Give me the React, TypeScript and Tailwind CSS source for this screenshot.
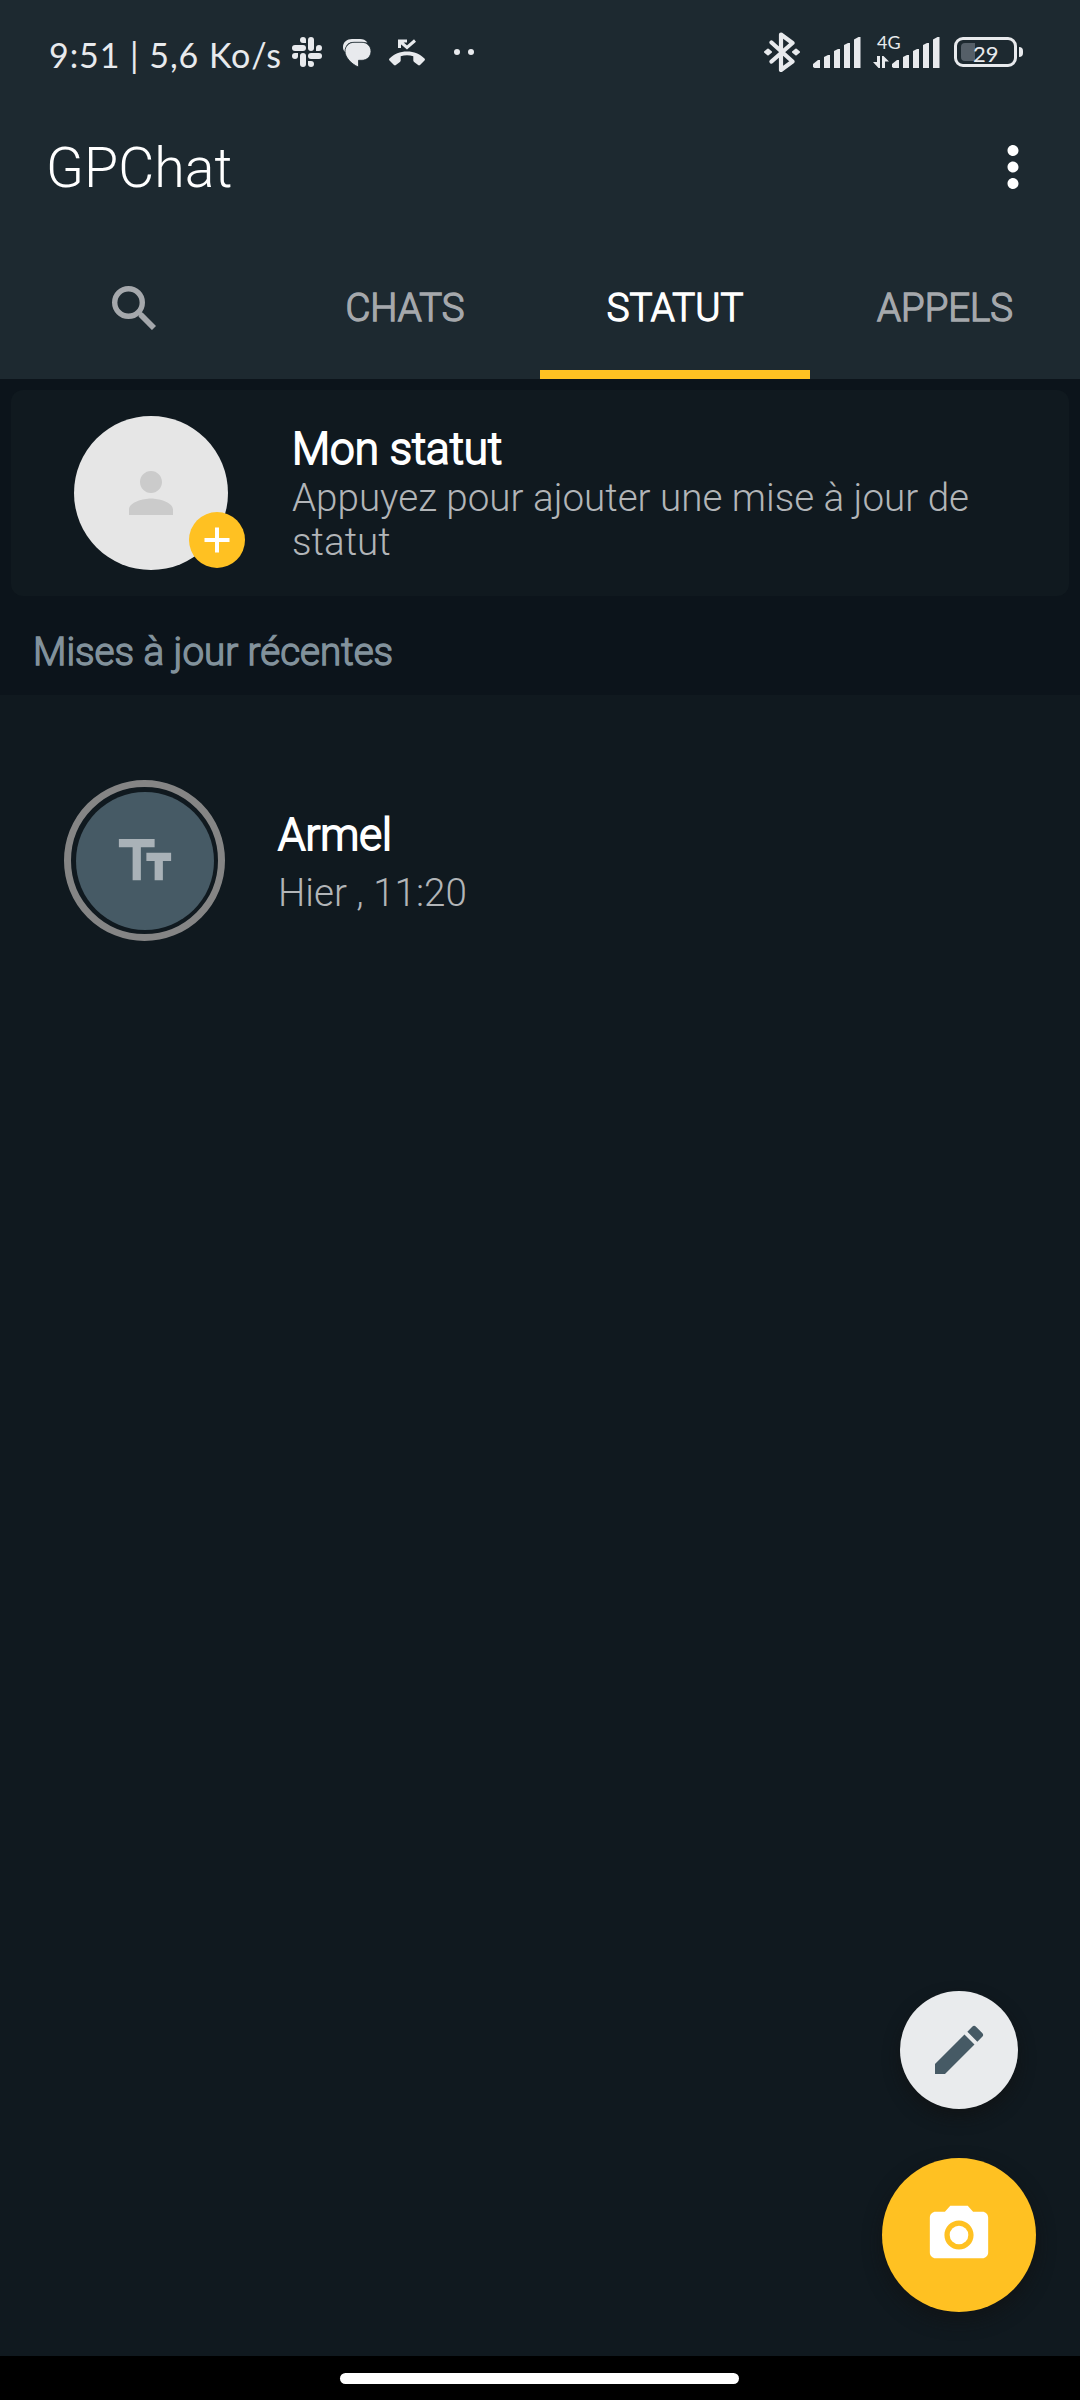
import type { ReactNode } from "react";
import clsx from "clsx";
import {
  MdEdit,
  MdMoreVert,
  MdPerson,
  MdPhotoCamera,
  MdTextFields,
} from "react-icons/md";

function SlackIcon() {
  return (
    <svg viewBox="0 0 30 30" className="h-[30px] w-[30px]" fill="currentColor">
      <path d="M11 0a3 3 0 0 1 3 3v3h-3a3 3 0 0 1 0-6z" />
      <rect x="16" y="0" width="6" height="14" rx="3" />
      <path d="M30 11a3 3 0 0 1-3 3h-3v-3a3 3 0 0 1 6 0z" />
      <rect x="16" y="16" width="14" height="6" rx="3" />
      <path d="M19 30a3 3 0 0 1-3-3v-3h3a3 3 0 0 1 0 6z" />
      <rect x="8" y="16" width="6" height="14" rx="3" />
      <path d="M0 19a3 3 0 0 1 3-3h3v3a3 3 0 0 1-6 0z" />
      <rect x="0" y="8" width="14" height="6" rx="3" />
    </svg>
  );
}

function MessageIcon() {
  return (
    <svg viewBox="0 0 28 28" className="h-7 w-7" fill="currentColor">
      <path d="M9 0h8c3 0 5.500 1 7.500 3.500L10 3C5 3 2 7 2 13 0 11 0 9 0 8 0 3 4 0 9 0z" />
      <path
        d="M11 3.300h8c5 0 9 4 9 9s-4 9-9 9h-3.500V28C8 25 2 18 2 12.300c0-5 4-9 9-9z"
        stroke="#1d2930"
        strokeWidth="0.800"
      />
    </svg>
  );
}

function MissedCallIcon() {
  return (
    <svg viewBox="0 0 36 27" className="h-[27px] w-9" fill="currentColor">
      <path
        d="M10.500 9V2h7.500M10.500 2l7.500 6.500 8-7"
        fill="none"
        stroke="currentColor"
        strokeWidth="3"
      />
      <path d="M18 12.500c7 0 13 2.500 17.500 7 .6.600.6 1.400 0 2L31 26c-.6.600-1.300.600-1.900.100l-4-3.100c-.5-.4-.8-.9-.8-1.500v-4.300c-4.100-1.300-8.500-1.300-12.600 0v4.300c0 .6-.3 1.100-.8 1.500l-4 3.100c-.6.500-1.300.5-1.900-.1L.5 21.500c-.6-.6-.6-1.400 0-2 4.500-4.500 10.500-7 17.500-7z" />
    </svg>
  );
}

function BluetoothIcon() {
  return (
    <svg viewBox="0 0 36 40" className="h-10 w-9" fill="currentColor">
      <path
        d="M7.500 10.500l21 19-11.500 8.500V2.500l11.500 8.500-21 18.500"
        fill="none"
        stroke="currentColor"
        strokeWidth="4.200"
        strokeLinejoin="round"
        strokeLinecap="round"
      />
      <path
        d="M1 20l3-2.500L7 20l-3 2.500zM29 20l3-2.500 3 2.500-3 2.500z"
        stroke="currentColor"
        strokeWidth="2"
        strokeLinejoin="round"
      />
    </svg>
  );
}

function SignalIcon() {
  return (
    <svg viewBox="0 0 48 31" className="h-[31px] w-12" fill="currentColor">
      <path d="M0 27l5-4h2v8H1.500L0 30zM11 20l4-2h2v13h-6zM21 14l4-2h2v19h-6zM31 8l4-2h2v25h-6zM41 2.500L45.500 0H47.500v31H41z" />
    </svg>
  );
}

function DataArrowsIcon() {
  return (
    <svg viewBox="0 0 16 12" className="h-3 w-4" fill="currentColor">
      <path d="M4 0h3v12H5.500L0 6h4zM9 12V0h1.500L16 5.500h-4V12z" />
    </svg>
  );
}

function SearchIcon() {
  return (
    <svg viewBox="0 0 44 44" className="mr-0.5 h-11 w-11" fill="none" stroke="currentColor">
      <circle cx="16.500" cy="16.500" r="13.800" strokeWidth="5.400" />
      <path d="M28.500 28.500L42 42" strokeWidth="5.800" />
      <path d="M26.500 29l3-3" strokeWidth="4" />
    </svg>
  );
}

function StatusBar() {
  return (
    <div className="flex h-[108px] items-start pl-[49px] text-[#e8eaed]">
      <span className="mt-[34px] w-[243px] whitespace-nowrap font-['Lato'] text-[34px] leading-[42px] tracking-[0.95px]">
        9:51 | 5,6 Ko/s
      </span>
      <div className="mt-[37px]">
        <SlackIcon />
      </div>
      <div className="mt-[39px] ml-[21px]">
        <MessageIcon />
      </div>
      <div className="mt-[39px] ml-[18px]">
        <MissedCallIcon />
      </div>
      <div className="mt-[49px] ml-[29px] flex gap-2">
        <span className="h-1.5 w-1.5 rounded-full bg-current" />
        <span className="h-1.5 w-1.5 rounded-full bg-current" />
      </div>
      <div className="mt-8 ml-[290px]">
        <BluetoothIcon />
      </div>
      <div className="mt-[37px] ml-[13px]">
        <SignalIcon />
      </div>
      <div className="mt-[33px] ml-3 w-[19px]">
        <p className="ml-1 font-['Lato'] text-[18px] leading-[18px]">4G</p>
        <div className="mt-[5px]">
          <DataArrowsIcon />
        </div>
      </div>
      <div className="mt-[37px]">
        <SignalIcon />
      </div>
      <div className="mt-[37px] ml-[14px] flex items-center gap-0.5">
        <div className="flex h-[30px] w-[63px] items-center rounded-[9px] border-3 border-current pl-1">
          <span className="h-[18px] w-[14px] rounded-l-[4px] bg-[#555f68]" />
          <span className="mt-1 -ml-0.5 font-['Lato'] text-[22px] leading-[22px]">29</span>
        </div>
        <span className="h-2.5 w-1 rounded-r-full bg-current" />
      </div>
    </div>
  );
}

function Tab({ active, children }: { active?: boolean; children: ReactNode }) {
  return (
    <button
      className={clsx(
        "flex h-[143px] w-[270px] items-center justify-center border-b-[9px] pt-2.5 text-[38.3px] font-light [-webkit-text-stroke:1.4px_currentColor]",
        active ? "border-[#ffc122] text-white" : "border-transparent text-[#a5a8ac]"
      )}
    >
      {children}
    </button>
  );
}

function Header() {
  return (
    <header className="bg-[#1d2930]">
      <StatusBar />
      <div className="flex h-32 items-center justify-between pr-[34px] pl-[46px]">
        <h1 className="-mt-1.5 text-[55.5px] leading-[68px] font-light text-white">
          GPChat
        </h1>
        <MdMoreVert className="-mt-[10px] h-[66px] w-[66px] text-white" />
      </div>
      <nav className="flex">
        <Tab>
          <SearchIcon />
        </Tab>
        <Tab>CHATS</Tab>
        <Tab active>STATUT</Tab>
        <Tab>APPELS</Tab>
      </nav>
    </header>
  );
}

function MyStatus() {
  return (
    <div className="mx-[11px] flex h-[206px] items-center rounded-[12px] bg-[#10191f] pl-[63px]">
      <div className="relative flex h-[154px] w-[154px] items-center justify-center rounded-full bg-[#e6e6e6]">
        <MdPerson className="h-[66px] w-[66px] text-[#cbcbcb]" />
        <span className="absolute -right-[17px] bottom-[2px] flex h-14 w-14 items-center justify-center rounded-full bg-[#ffc122]">
          <svg viewBox="0 0 26 26" className="h-[26px] w-[26px]" stroke="#fff" strokeWidth="4">
            <path d="M13 0.500v25M0.500 13h25" />
          </svg>
        </span>
      </div>
      <div className="ml-[64px] w-[720px] pb-px">
        <p className="text-[44px] leading-[54px] font-light text-white [-webkit-text-stroke:1.8px_currentColor]">
          Mon statut
        </p>
        <p className="text-[38.6px] leading-[44px] font-light text-[#b2b5b8]">
          Appuyez pour ajouter une mise à jour de statut
        </p>
      </div>
    </div>
  );
}

function StatusRow({ name, time }: { name: string; time: string }) {
  return (
    <div className="mt-[85px] flex pl-16">
      <div className="flex h-[161px] w-[161px] items-center justify-center rounded-full border-[7px] border-[#858585]">
        <div className="flex h-[138px] w-[138px] items-center justify-center rounded-full bg-[#465a65]">
          <MdTextFields className="h-[66px] w-[66px] text-[#a9b2b8]" />
        </div>
      </div>
      <div className="mt-7 ml-[53px]">
        <p className="text-[44px] leading-[54px] font-light text-white [-webkit-text-stroke:1.8px_currentColor]">
          {name}
        </p>
        <p className="mt-[9px] text-[38.6px] leading-[44px] font-light text-[#b2b5b8]">{time}</p>
      </div>
    </div>
  );
}

export default function App() {
  return (
    <div className="relative flex h-[2400px] w-[1080px] flex-col overflow-hidden bg-[#10191f] font-['Roboto',sans-serif]">
      <Header />
      <section className="h-[316px] bg-[#0c141b] pt-[11px]">
        <MyStatus />
        <h2 className="mt-[31px] ml-[33px] text-[38.6px] leading-[50px] font-light text-[#82929c] [-webkit-text-stroke:1.4px_currentColor]">
          Mises à jour récentes
        </h2>
      </section>
      <main className="grow">
        <StatusRow name="Armel" time="Hier , 11:20" />
      </main>

      <div className="absolute right-11 bottom-[88px] flex flex-col items-center gap-[49px]">
        <button className="flex h-[118px] w-[118px] items-center justify-center rounded-full bg-[#e9ebed] shadow-[0_8px_16px_rgba(16,16,16,0.6)]">
          <MdEdit className="h-16 w-16 text-[#465a65]" />
        </button>
        <button className="flex h-[154px] w-[154px] items-center justify-center rounded-full bg-[#ffc122] shadow-[0_8px_18px_rgba(16,16,16,0.6)]">
          <MdPhotoCamera className="h-[70px] w-[70px] text-white" />
        </button>
      </div>

      <footer className="flex h-11 justify-center bg-black pt-[17px]">
        <span className="mr-px h-[11px] w-[399px] rounded-full bg-white" />
      </footer>
    </div>
  );
}
